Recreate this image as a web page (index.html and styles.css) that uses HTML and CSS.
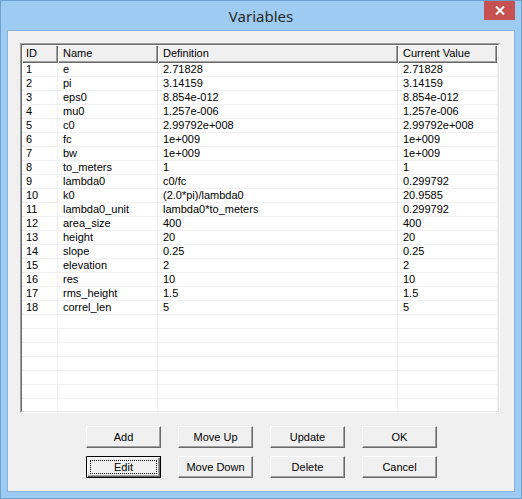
FILE: index.html
```html
<!DOCTYPE html>
<html lang="en">
<head>
    <meta charset="UTF-8">
    <title>Variables</title>
    <link rel="stylesheet" href="styles.css">
</head>
<body>
    <div class="window">
        <div class="titlebar">
            <span class="title">Variables</span>
            <div class="close">
                <svg width="10" height="9" viewBox="0 0 10 9"><path d="M1 0.5 L9 8.5 M9 0.5 L1 8.5" stroke="#fff" stroke-width="2"/></svg>
            </div>
        </div>
        <div class="client">
            <div class="listview">
                <div class="listview-inner">
                    <div class="header">
                        <div class="hcell first">ID</div>
                        <div class="hcell">Name</div>
                        <div class="hcell">Definition</div>
                        <div class="hcell">Current Value</div>
                        <div class="hfill"></div>
                    </div>
                    <div class="rows">
                        <div class="row"><div class="cell first">1</div><div class="cell">e</div><div class="cell">2.71828</div><div class="cell">2.71828</div></div>
                        <div class="row"><div class="cell first">2</div><div class="cell">pi</div><div class="cell">3.14159</div><div class="cell">3.14159</div></div>
                        <div class="row"><div class="cell first">3</div><div class="cell">eps0</div><div class="cell">8.854e-012</div><div class="cell">8.854e-012</div></div>
                        <div class="row"><div class="cell first">4</div><div class="cell">mu0</div><div class="cell">1.257e-006</div><div class="cell">1.257e-006</div></div>
                        <div class="row"><div class="cell first">5</div><div class="cell">c0</div><div class="cell">2.99792e+008</div><div class="cell">2.99792e+008</div></div>
                        <div class="row"><div class="cell first">6</div><div class="cell">fc</div><div class="cell">1e+009</div><div class="cell">1e+009</div></div>
                        <div class="row"><div class="cell first">7</div><div class="cell">bw</div><div class="cell">1e+009</div><div class="cell">1e+009</div></div>
                        <div class="row"><div class="cell first">8</div><div class="cell">to_meters</div><div class="cell">1</div><div class="cell">1</div></div>
                        <div class="row"><div class="cell first">9</div><div class="cell">lambda0</div><div class="cell">c0/fc</div><div class="cell">0.299792</div></div>
                        <div class="row"><div class="cell first">10</div><div class="cell">k0</div><div class="cell">(2.0*pi)/lambda0</div><div class="cell">20.9585</div></div>
                        <div class="row"><div class="cell first">11</div><div class="cell">lambda0_unit</div><div class="cell">lambda0*to_meters</div><div class="cell">0.299792</div></div>
                        <div class="row"><div class="cell first">12</div><div class="cell">area_size</div><div class="cell">400</div><div class="cell">400</div></div>
                        <div class="row"><div class="cell first">13</div><div class="cell">height</div><div class="cell">20</div><div class="cell">20</div></div>
                        <div class="row"><div class="cell first">14</div><div class="cell">slope</div><div class="cell">0.25</div><div class="cell">0.25</div></div>
                        <div class="row"><div class="cell first">15</div><div class="cell">elevation</div><div class="cell">2</div><div class="cell">2</div></div>
                        <div class="row"><div class="cell first">16</div><div class="cell">res</div><div class="cell">10</div><div class="cell">10</div></div>
                        <div class="row"><div class="cell first">17</div><div class="cell">rms_height</div><div class="cell">1.5</div><div class="cell">1.5</div></div>
                        <div class="row"><div class="cell first">18</div><div class="cell">correl_len</div><div class="cell">5</div><div class="cell">5</div></div>
                        <div class="row"><div class="cell first"></div><div class="cell"></div><div class="cell"></div><div class="cell"></div></div>
                        <div class="row"><div class="cell first"></div><div class="cell"></div><div class="cell"></div><div class="cell"></div></div>
                        <div class="row"><div class="cell first"></div><div class="cell"></div><div class="cell"></div><div class="cell"></div></div>
                        <div class="row"><div class="cell first"></div><div class="cell"></div><div class="cell"></div><div class="cell"></div></div>
                        <div class="row"><div class="cell first"></div><div class="cell"></div><div class="cell"></div><div class="cell"></div></div>
                        <div class="row"><div class="cell first"></div><div class="cell"></div><div class="cell"></div><div class="cell"></div></div>
                        <div class="row"><div class="cell first"></div><div class="cell"></div><div class="cell"></div><div class="cell"></div></div>
                    </div>
                </div>
            </div>
            <div class="buttons">
                <button class="btn">Add</button>
                <button class="btn">Move Up</button>
                <button class="btn">Update</button>
                <button class="btn">OK</button>
                <button class="btn default"><span class="focus">Edit</span></button>
                <button class="btn">Move Down</button>
                <button class="btn">Delete</button>
                <button class="btn">Cancel</button>
            </div>
        </div>
    </div>
</body>
</html>
```

FILE: styles.css
```css
:root {
    --frame-color: #9dcbf1;
    --frame-border: #6d9fcf;
    --face-color: #f0f0f0;
    --shadow-color: #a0a0a0;
    --dark-shadow: #696969;
    --grid-color: #f0f0f0;
}

body {
    margin: 0;
    font-family: "Liberation Sans", Arial, sans-serif;
    font-size: 11px;
    color: #000;
}

.window {
    width: 522px;
    height: 499px;
    box-sizing: border-box;
    border: 1px solid var(--frame-border);
    background-color: var(--frame-color);
    display: flex;
    flex-direction: column;
}

.titlebar {
    height: 29px;
    position: relative;
    display: flex;
    align-items: center;
    justify-content: center;
}

.title {
    font-family: "Noto Sans", sans-serif;
    font-size: 15px;
    color: #2a2a2a;
    margin-top: 1px;
}

.close {
    position: absolute;
    top: 0;
    right: 6px;
    width: 31px;
    height: 19px;
    background-color: #c75050;
    display: flex;
    align-items: center;
    justify-content: center;
}

.client {
    margin: 0 6px;
    height: 462px;
    box-sizing: border-box;
    border: 1px solid #84b3df;
    background-color: var(--face-color);
    padding: 12px 0 0 12px;
}

.listview {
    width: 480px;
    height: 370px;
    box-sizing: border-box;
    border: 1px solid;
    border-color: var(--shadow-color) #fff #fff var(--shadow-color);
}

.listview-inner {
    height: 100%;
    box-sizing: border-box;
    border: 1px solid;
    border-color: var(--dark-shadow) #e3e3e3 #e3e3e3 var(--dark-shadow);
    background-color: #fff;
    overflow: hidden;
}

.header {
    display: grid;
    grid-template-columns: 36px 100px 240px 99px 1fr;
    height: 18px;
}

.hcell {
    background-color: var(--face-color);
    box-shadow: inset 1px 1px #fff, inset -1px -1px var(--dark-shadow), inset -2px -2px var(--shadow-color);
    padding-left: 5px;
    line-height: 17px;
    white-space: nowrap;
    overflow: hidden;
}

.hcell.first {
    padding-left: 4px;
}

.row {
    display: grid;
    grid-template-columns: 36px 100px 240px 100px;
    height: 14px;
}

.cell {
    box-sizing: border-box;
    border-right: 1px solid var(--grid-color);
    border-bottom: 1px solid var(--grid-color);
    padding-left: 5px;
    line-height: 13px;
    white-space: nowrap;
    overflow: hidden;
}

.cell.first {
    padding-left: 4px;
}

.buttons {
    display: grid;
    grid-template-columns: repeat(4, 75px);
    column-gap: 17px;
    row-gap: 8px;
    margin: 13px 0 0 66px;
}

.btn {
    height: 22px;
    box-sizing: border-box;
    padding: 0;
    font-family: inherit;
    font-size: 11px;
    color: #000;
    background-color: var(--face-color);
    border: 1px solid;
    border-color: #fff var(--dark-shadow) var(--dark-shadow) #fff;
    box-shadow: inset -1px -1px var(--shadow-color);
}

.btn.default {
    border-color: #000;
    box-shadow: inset 1px 1px #fff, inset -1px -1px var(--dark-shadow), inset -2px -2px var(--shadow-color);
    display: flex;
}

.focus {
    flex: 1;
    margin: 3px;
    border: 1px dotted #000;
    line-height: 12px;
}
```
